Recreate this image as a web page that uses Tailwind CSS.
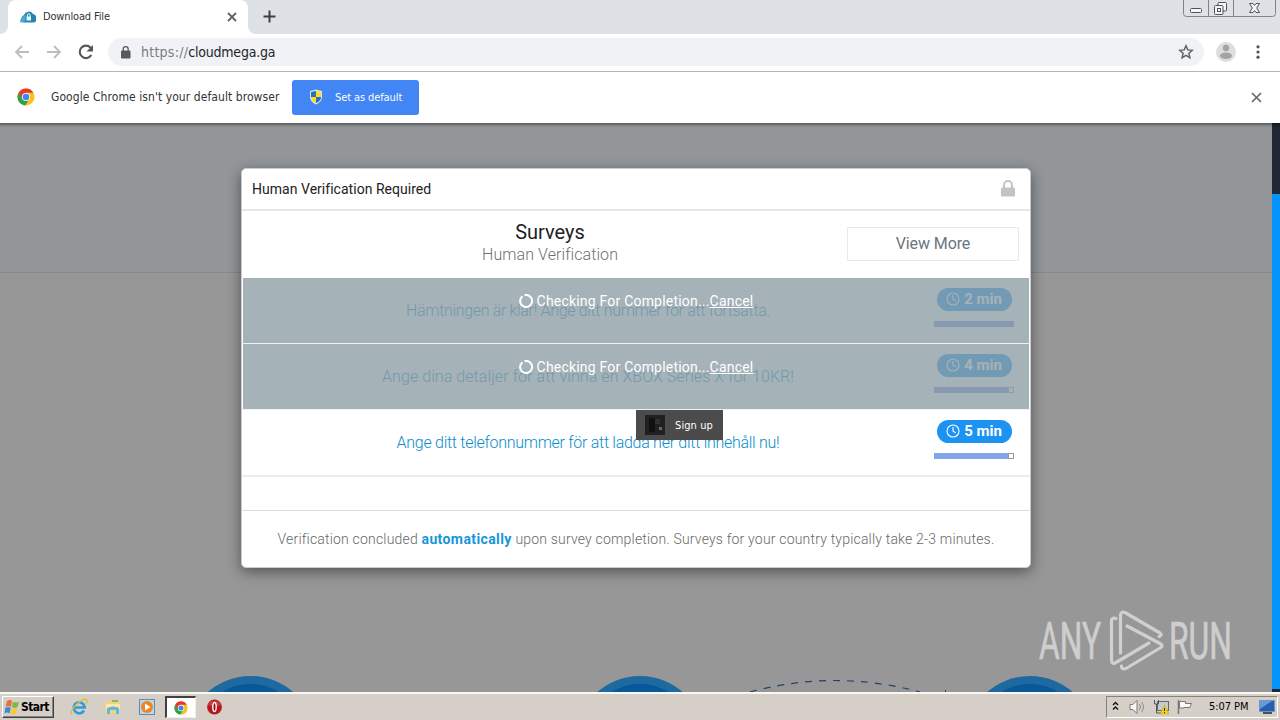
<!DOCTYPE html>
<html lang="en">
<head>
<meta charset="utf-8">
<title>Download File</title>
<script src="https://cdn.jsdelivr.net/npm/@tailwindcss/browser@4"></script>
</head>
<body class="w-[1280px] h-[720px] overflow-hidden flex flex-col font-['DejaVu_Sans_Condensed','DejaVu_Sans',sans-serif] text-[#303438]">
<svg class="hidden">
  <symbol id="chrome" viewBox="0 0 18 18">
    <circle cx="9" cy="9" r="8.5" fill="#fbc116"/>
    <path d="M1.6 4.8A8.5 8.5 0 0 0 8.2 17.5L12.4 11 9 9 5.400 11z" fill="#2ba24c"/>
    <path d="M1.6 4.8A8.5 8.5 0 0 1 16.400 4.8H9L5.400 11z" fill="#e33b2e"/>
    <circle cx="9" cy="9" r="4.1" fill="#fff"/><circle cx="9" cy="9" r="3.3" fill="#4285f4"/>
  </symbol>
  <symbol id="clock" viewBox="0 0 14 14">
    <circle cx="7" cy="7" r="6" fill="none" stroke="#fff" stroke-width="1.1"/><path d="M7 3v4l2.6 2" fill="none" stroke="#fff" stroke-width="1.1"/>
  </symbol>
  <symbol id="spinner" viewBox="0 0 14 14">
    <path d="M3.500 2.200A6 6 0 1 0 5.500 1.200" fill="none" stroke="#fff" stroke-width="2"/>
  </symbol>
</svg>

<header class="h-[34px] shrink-0 bg-[#dee1e6] flex justify-between">
  <div class="flex">
    <div class="w-2 bg-white"><div class="h-full bg-[#dee1e6] rounded-br-lg"></div></div>
    <div class="w-[240px] bg-white rounded-t-lg flex items-center pl-3 pr-[11px]">
      <svg class="w-4 h-3" viewBox="0 0 16 12"><path d="M4 11.5A4 4 0 0 1 4 4 5 5 0 0 1 13 3 4.500 4.500 0 0 1 14 11.500z" fill="#2086ad"/><path d="M0 10.500C1 6 3 5 6 4L5 11.500H1z" fill="#4aa8cc"/><rect x="6.500" y="5.500" width="4.500" height="4" fill="#e8f6fb"/><path d="M7.500 6V4a1.300 1.300 0 0 1 2.600 0v2" fill="none" stroke="#e8f6fb"/></svg>
      <span class="ml-[7px] pt-px text-[11px] whitespace-nowrap tracking-[-0.15px]">Download File</span>
      <svg class="ml-auto w-[10px] h-[10px]" viewBox="0 0 10 10"><path d="M1 1l8 8M9 1 1 9" stroke="#5f6368" stroke-width="1.8"/></svg>
    </div>
    <div class="w-2 bg-white"><div class="h-full bg-[#dee1e6] rounded-bl-lg"></div></div>
    <svg class="w-[13px] h-[13px] ml-[7px] mt-[10px]" viewBox="0 0 13 13"><path d="M6.500 .500v12M.500 6.500h12" stroke="#3c4043" stroke-width="2"/></svg>
  </div>
  <svg class="w-[94px] h-[18px] mr-[3px]" viewBox="0 0 94 18" fill="none" stroke="#7d838c">
    <path d="M.500 0v13.500q0 3 3 3h86q3 0 3-3V0M25.500 0v16M50.500 0v16"/>
    <g stroke="#4c535c" fill="#f4f5f7"><rect x="7.500" y="8.500" width="11" height="4" rx="1"/><rect x="35" y="2.500" width="8.500" height="8.500" rx="1"/><rect x="31.500" y="5.500" width="8.500" height="9" rx="1"/><rect x="34.500" y="8.500" width="3" height="3"/>
    <path d="M66.500 3.500h3.500l1.500 2 1.500-2h3.500l-2.800 4.500 2.800 4.500h-3.500l-1.500-2-1.500 2h-3.500l2.800-4.500z"/></g>
  </svg>
</header>

<div class="h-[38px] shrink-0 bg-white border-b border-[#b6b6b8] flex items-center pl-[14px] pr-[18px]">
  <svg class="w-4 h-4 mb-px" viewBox="0 0 16 16" fill="none" stroke="#bcbdbf" stroke-width="1.800"><path d="M15 8H2M8 2 2 8l6 6"/></svg>
  <svg class="w-4 h-4 ml-4 mb-px" viewBox="0 0 16 16" fill="none" stroke="#bcbdbf" stroke-width="1.800"><path d="M1 8h13M8 2l6 6-6 6"/></svg>
  <svg class="w-4 h-4 ml-4 mb-px" viewBox="0 0 16 16"><path d="M13.300 11A6.200 6.200 0 1 1 12.800 4" fill="none" stroke="#53575b" stroke-width="2.100"/><path d="M15 1v6.500H8.500z" fill="#53575b"/></svg>
  <div class="ml-[14px] w-[1096px] h-7 mb-px rounded-full bg-[#f0f2f5] flex items-center pl-[13px] pr-[10px]">
    <svg class="w-[10px] h-[13px]" viewBox="0 0 10 13"><rect x="0" y="4.500" width="9.500" height="8" rx="1" fill="#55595d"/><path d="M2.200 5V3.200a2.500 2.500 0 0 1 5 0V5" fill="none" stroke="#55595d" stroke-width="1.300"/></svg>
    <span class="ml-[10px] text-[14px] tracking-[-0.2px] text-[#22262a] whitespace-nowrap"><span class="text-[#787d83] tracking-[0.25px]">https://</span>cloudmega.ga</span>
    <svg class="ml-auto w-4 h-4" viewBox="0 0 16 16"><path d="M8 1.800l1.800 4.100 4.500.400-3.400 3 1 4.400L8 11.400l-3.900 2.300 1-4.400-3.400-3 4.500-.400z" fill="none" stroke="#5f6368" stroke-width="1.500"/></svg>
  </div>
  <svg class="ml-3 w-5 h-5 mb-px" viewBox="0 0 20 20"><circle cx="10" cy="10" r="10" fill="#dededf"/><circle cx="10" cy="6" r="3.200" fill="#a3a3a4"/><ellipse cx="10" cy="13.800" rx="6" ry="3.200" fill="#a3a3a4"/></svg>
  <svg class="ml-auto w-[8px] h-4 mb-px" viewBox="0 0 8 16" fill="#505458"><circle cx="4" cy="2.800" r="1.600"/><circle cx="4" cy="8" r="1.600"/><circle cx="4" cy="13.200" r="1.600"/></svg>
</div>

<div class="h-[51px] shrink-0 bg-white flex items-center pl-[17px] pr-[18px]">
  <svg class="w-[18px] h-[18px] mb-px"><use href="#chrome"/></svg>
  <span class="ml-4 w-[241px] pb-px text-[12px] tracking-[0.070px] whitespace-nowrap">Google Chrome isn't your default browser</span>
  <div class="w-[127px] h-[35px] rounded-[3px] bg-[#4285f4] flex items-center pl-4 text-white">
    <svg class="w-4 h-4 mb-px" viewBox="0 0 16 16"><path d="M8 .500 14 2v6q0 5-6 7.500Q2 13 2 8V2z" fill="#d7e4ee"/><path d="M8 2v6H3V3z" fill="#2a70bb"/><path d="M8 2v6h5V3z" fill="#fbdc29"/><path d="M3 8h5v6Q3 12 3 8z" fill="#fbdc29"/><path d="M13 8H8v6q5-2 5-6z" fill="#2a70bb"/></svg>
    <span class="ml-[11px] pt-px text-[11px] tracking-[-0.1px] whitespace-nowrap">Set as default</span>
  </div>
  <svg class="ml-auto w-[11px] h-[11px] mb-px" viewBox="0 0 11 11"><path d="M1 1l9 9M10 1l-9 9" stroke="#66696c" stroke-width="1.700"/></svg>
</div>

<main class="relative h-[569px] shrink-0 flex overflow-hidden bg-[#979797]">
  <div class="w-[1272px] flex flex-col">
    <div class="h-[150px] bg-[#929699] border-b border-[#8b8887]"></div>
    <svg class="w-[1272px] h-[419px]" viewBox="0 273 1272 419">
      <g fill="#1d69a0"><circle cx="250.500" cy="741" r="65"/><circle cx="640" cy="741" r="65"/><circle cx="1030" cy="741" r="65"/></g>
      <g fill="#075799"><circle cx="250.500" cy="737" r="53"/><circle cx="640" cy="737" r="53"/><circle cx="1030" cy="737" r="53"/></g>
      <path d="M750 692Q835 669 920 692" fill="none" stroke="#25406b" stroke-width="1.200" stroke-dasharray="7 7"/>
      <path d="M945.500 690v2" stroke="#25406b"/>
    </svg>
  </div>
  <div class="w-2 flex flex-col"><div class="h-[71px] bg-[#1e2733]"></div><div class="h-[495px] bg-[#0594fb]"></div><div class="grow bg-[#1e2733]"></div></div>
  <div class="absolute inset-x-0 top-0 h-[4px] bg-linear-to-b from-black/40 to-transparent"></div>

  <section class="absolute left-[241px] top-[45px] w-[790px] h-[400px] rounded-[5px] bg-white border border-[#c9cbcc] shadow-[0_4px_14px_rgba(0,0,0,0.45)] font-[Roboto,sans-serif] flex flex-col">
    <div class="h-[42px] shrink-0 border-b-2 border-[#e6e6e6] flex items-center justify-between pl-[10px] pr-[15px] text-[14px] text-[#222]">
      <span class="whitespace-nowrap tracking-[0.030px]">Human Verification Required</span>
      <svg class="w-[14px] h-[17px] mb-px" viewBox="0 0 14 17"><rect y="7.500" width="14" height="9" rx="1" fill="#c3c3c3"/><path d="M3 8V5a4 4 0 0 1 8 0v3" fill="none" stroke="#c3c3c3" stroke-width="2"/></svg>
    </div>
    <div class="h-[67px] shrink-0 flex items-start pt-[9px]">
      <div class="w-[605px] pl-[11px] flex flex-col items-center">
        <div class="text-[20px] leading-[24px] text-[#222]">Surveys</div>
        <div class="text-[16px] leading-[21px] font-light text-[#707070] tracking-[0.080px]">Human Verification</div>
      </div>
      <div class="mt-[7px] w-[172px] h-[34px] border border-[#e9e9e9] flex items-center justify-center text-[16px] text-[#6c757d] tracking-[-0.1px]">View More</div>
    </div>
    <div class="relative h-[66px] shrink-0 border-b border-[#eef2f3] flex">
      <div class="w-[692px] flex items-center justify-center text-[16px] font-light text-[#0a8dcb] whitespace-nowrap"><span class="tracking-[-0.330px]">Hämtningen är klar! Ange ditt nummer för att fortsätta.</span></div>
      <div class="w-[80px] pt-[10px] flex flex-col items-center">
        <div class="w-[75px] h-[23px] rounded-full bg-[#1c92f2] flex items-center justify-center gap-1 text-white text-[15px] font-bold"><svg class="w-[14px] h-[14px] mb-px"><use href="#clock"/></svg>2 min</div>
        <div class="mt-[10px] w-[80px] h-[6px] bg-[#7b93d8]"></div>
      </div>
      <div class="absolute inset-y-0 left-px right-px bg-[#8c9ca3]/78 flex justify-center pt-[13px] text-[14px] leading-[20px] text-white whitespace-nowrap"><svg class="w-[14px] h-[14px] mt-[3px] mr-1"><use href="#spinner"/></svg><span class="tracking-[0.2px]">Checking For Completion...<u>Cancel</u></span></div>
    </div>
    <div class="relative h-[66px] shrink-0 border-b border-[#eef2f3] flex">
      <div class="w-[692px] flex items-center justify-center text-[16px] font-light text-[#0a8dcb] whitespace-nowrap"><span class="tracking-[0.070px]">Ange dina detaljer för att vinna en XBOX Series X för 10KR!</span></div>
      <div class="w-[80px] pt-[10px] flex flex-col items-center">
        <div class="w-[75px] h-[23px] rounded-full bg-[#1c92f2] flex items-center justify-center gap-1 text-white text-[15px] font-bold"><svg class="w-[14px] h-[14px] mb-px"><use href="#clock"/></svg>4 min</div>
        <div class="mt-[10px] w-[80px] h-[6px] bg-[#7b93d8] flex justify-end"><div class="w-[6px] bg-white border border-[#9a9a9a]"></div></div>
      </div>
      <div class="absolute inset-y-0 left-px right-px bg-[#8c9ca3]/78 flex justify-center pt-[13px] text-[14px] leading-[20px] text-white whitespace-nowrap"><svg class="w-[14px] h-[14px] mt-[3px] mr-1"><use href="#spinner"/></svg><span class="tracking-[0.2px]">Checking For Completion...<u>Cancel</u></span></div>
    </div>
    <div class="h-[67px] shrink-0 border-b-2 border-[#ededed] flex">
      <div class="w-[692px] flex items-center justify-center text-[16px] font-light text-[#0a8dcb] whitespace-nowrap"><span class="tracking-[-0.280px]">Ange ditt telefonnummer för att ladda ner ditt innehåll nu!</span></div>
      <div class="w-[80px] pt-[10px] flex flex-col items-center">
        <div class="w-[75px] h-[23px] rounded-full bg-[#1c92f2] flex items-center justify-center gap-1 text-white text-[15px] font-bold"><svg class="w-[14px] h-[14px] mb-px"><use href="#clock"/></svg>5 min</div>
        <div class="mt-[10px] w-[80px] h-[6px] bg-[#82a8ea] flex justify-end"><div class="w-[6px] bg-white border border-[#9a9a9a]"></div></div>
      </div>
    </div>
    <div class="h-[34px] shrink-0 border-b border-[#dedede]"></div>
    <div class="grow flex items-center justify-center text-[14px] font-light text-[#686868] whitespace-nowrap"><span class="tracking-[0.190px]">Verification concluded <b class="font-bold text-[#1796da] tracking-[0.4px]">automatically</b> upon survey completion. Surveys for your country typically take 2-3 minutes.</span></div>
  </section>

  <div class="absolute left-[636px] top-[287px] w-[87px] h-[30px] bg-[#4b4b4b] flex items-center pl-[9px] text-white text-[11px] whitespace-nowrap">
    <svg class="w-5 h-5" viewBox="0 0 20 20"><rect width="20" height="20" fill="#202022"/><path d="M4 3h6v14H4z" fill="#101012"/><path d="M10 4h5v5h-5z" fill="#303035"/><rect x="14" y="12" width="3" height="3" fill="#68686c"/></svg>
    <span class="ml-[10px] pt-[2px] tracking-[0.1px]">Sign up</span>
  </div>

  <div class="absolute left-[1036px] top-[478px] w-[210px] h-[80px]">
    <svg class="w-[210px] h-[80px]" viewBox="1036 601 210 80" fill="none" stroke="#d0d0d0" stroke-width="3.200" stroke-linejoin="round">
      <text x="1039" y="659" textLength="62" lengthAdjust="spacingAndGlyphs" font-family="Roboto, sans-serif" font-size="51" fill="#cecece" stroke="#cecece" stroke-width=".7">ANY</text>
      <text x="1169" y="659" textLength="63" lengthAdjust="spacingAndGlyphs" font-family="Roboto, sans-serif" font-size="51" fill="#cecece" stroke="#cecece" stroke-width=".7">RUN</text>
      <path stroke-linecap="round" d="M1116 618.500Q1111.500 617 1111.500 621V660Q1111.500 665 1116 662.500L1149 643M1120.500 653V616Q1120.500 611 1125 612.500L1160 633Q1163 635 1159 636.500M1127 626 1160 643.500Q1164 645.500 1160 648L1126 668.500Q1121 670 1121.500 666"/>
    </svg>
  </div>
</main>

<footer class="h-[28px] shrink-0 bg-[#d5cfc8] border-t-2 border-[#f9f8f6] flex items-center">
  <div class="ml-[2px] w-[52px] h-[22px] border border-t-white border-l-white border-r-[#404040] border-b-[#404040] shadow-[inset_-1px_-1px_#8b8780] flex items-center pl-px text-[12px] font-bold text-black whitespace-nowrap">
    <svg class="w-4 h-4 shrink-0" viewBox="0 0 16 16"><path d="M3 2q3-2 5 0L7 8Q4 6 1.500 8z" fill="#ed6d3b"/><path d="M9 2.500q3 2 6 0L13.500 8q-3 2-5.500 0z" fill="#7eb83d"/><path d="M1.300 9Q4 7 6.700 9l-1.200 5.500q-2.500-2-5 0z" fill="#3f88cf"/><path d="M8 9q2.500 2 5.300 0L12 14.500q-3 2-5.500 0z" fill="#fac832"/></svg>
    <span class="ml-px tracking-[-0.6px]">Start</span>
  </div>
  <svg class="ml-4 w-[18px] h-[18px]" viewBox="0 0 18 18"><path d="M14 12.500A5.500 5.500 0 1 1 14.700 9.500H5" fill="none" stroke="#329cda" stroke-width="2.700"/><path d="M2 16.500C-1.500 12 13-1.500 17 2q1 1-1 4" fill="none" stroke="#dfbc3e" stroke-width="1.300"/></svg>
  <svg class="ml-[17px] w-4 h-4" viewBox="0 0 16 16"><path d="M0 3h5l1-2h8v13H0z" fill="#f0d57b"/><path d="M1 5h14v6H1z" fill="#f9e9a9"/><path d="M2 15V9q6-3 12 0v6h-3v-4H5v4z" fill="#67b5dc"/><path d="M7 2h6" stroke="#6aac62" stroke-width="1.500"/></svg>
  <svg class="ml-[18px] w-4 h-4" viewBox="0 0 16 16"><rect x=".500" y=".500" width="15" height="15" fill="#b9d7e9" stroke="#538fb7"/><circle cx="8" cy="8" r="6" fill="#ef8423"/><path d="M6 4.500 11.500 8 6 11.500z" fill="#fff"/></svg>
  <div class="ml-[10px] w-[31px] h-[22px] bg-white border-t-2 border-l-2 border-t-[#404040] border-l-[#404040] border-r border-b border-r-[#eee] border-b-[#eee] flex items-center justify-center"><svg class="w-[14px] h-[14px]"><use href="#chrome"/></svg></div>
  <svg class="ml-[11px] w-[15px] h-[16px]" viewBox="0 0 15 16"><circle cx="7.500" cy="8" r="7.400" fill="#b8161a"/><path d="M1 6a7 7 0 0 1 13 0q-6 3-13 0z" fill="#db5555" opacity=".6"/><ellipse cx="7.500" cy="8" rx="1.700" ry="4.500" fill="#8d1013" stroke="#fff" stroke-width="1.400"/></svg>
  <div class="ml-auto mr-[2px] w-[172px] h-[22px] border border-t-[#85817b] border-l-[#85817b] border-r-white border-b-white flex items-center pl-[5px] text-black">
    <svg class="w-[8px] h-[10px] mb-[2px]" viewBox="0 0 8 10" fill="none" stroke="#111" stroke-width="1.400"><path d="M1 4l2.500-2.500L6 4M1 8.500 3.500 6 6 8.500"/></svg>
    <svg class="ml-[9px] w-[17px] h-4" viewBox="0 0 17 16"><path d="M1 5.500h3l4-4v13l-4-4H1z" fill="#fafafa" stroke="#7b7b7b"/><path d="M10.500 5q2 3 0 6M12.500 3q4 5 0 10" fill="none" stroke="#8b8b8b"/></svg>
    <svg class="ml-[7px] w-4 h-4" viewBox="0 0 16 16"><rect x="4.500" y="2.500" width="11" height="9" fill="#c3ccd3" stroke="#65696e"/><path d="M1.500 1v4h4V1M3.500 5v9H9" fill="none" stroke="#555"/><path d="M11.500 6 16 15H7z" fill="#f7cf20" stroke="#ba960d" stroke-width=".500"/><path d="M11.500 9v3M11.500 13v1" stroke="#333"/></svg>
    <svg class="ml-[8px] w-4 h-4" viewBox="0 0 16 16"><path d="M1.500 1v14" stroke="#777" stroke-width="1.500"/><path d="M2.500 2.500h6v2h6l-1.500 3 0 1H7V9H2.500z" fill="#fafafa" stroke="#777"/></svg>
    <span class="ml-[16px] pt-px text-[11px] tracking-[-0.050px] whitespace-nowrap">5:07 PM</span>
    <svg class="ml-auto mr-[2px] w-[16px] h-[14px]" viewBox="0 0 16 14"><rect x=".500" y=".500" width="15" height="11" fill="#265faf" stroke="#7194c1"/><path d="M1 1h12L1 9z" fill="#639bda"/><path d="M4 13h9" stroke="#4b5055" stroke-width="2"/></svg>
  </div>
</footer>
</body>
</html>
